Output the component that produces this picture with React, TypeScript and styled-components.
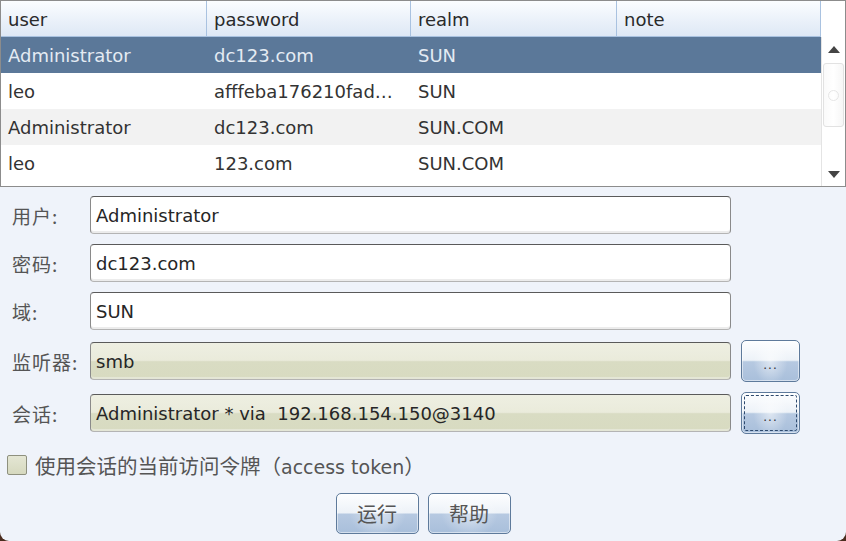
import React from "react";
import styled, { createGlobalStyle } from "styled-components";

const GlobalStyle = createGlobalStyle`
  html, body {
    margin: 0;
    padding: 0;
    background: #4a2c1e;
  }
  #root {
    width: 846px;
    height: 541px;
  }
`;

const LATIN = `"DejaVu Sans", "Noto Sans CJK SC", sans-serif`;
const CJK = `"Noto Sans CJK SC", "DejaVu Sans", sans-serif`;

const Window = styled.div`
  width: 846px;
  height: 541px;
  overflow: hidden;
  background: #eff3fa;
  border-bottom-left-radius: 9px;
  border-bottom-right-radius: 9px;
  display: flex;
  flex-direction: column;
  font-family: ${LATIN};
`;

/* table */
const Table = styled.div`
  height: 187px;
  box-sizing: border-box;
  border: 1px solid #8c8c8c;
  background: #fff;
  display: flex;
  flex-direction: column;
`;

const HeaderRow = styled.div`
  display: flex;
  height: 36px;
  flex: none;
`;

const HeaderCells = styled.div`
  display: flex;
  width: 820px;
  box-sizing: border-box;
  background: linear-gradient(#fbfdff, #e9f0f9 60%, #dee8f5);
  border-bottom: 1px solid #a9c2e0;
`;

const HeaderCell = styled.div<{ $w: number }>`
  width: ${(p) => p.$w}px;
  box-sizing: border-box;
  border-right: 1px solid #a9c2e0;
  padding: 2px 0 0 7px;
  display: flex;
  align-items: center;
  font-size: 18px;
  color: #2a2a2a;
`;

const Body = styled.div`
  flex: 1;
  display: flex;
  min-height: 0;
`;

const Rows = styled.div`
  width: 820px;
  display: flex;
  flex-direction: column;
`;

const Row = styled.div<{ $selected?: boolean; $odd?: boolean }>`
  display: flex;
  height: 36px;
  background: ${(p) => (p.$selected ? "#5b7899" : p.$odd ? "#f2f2f2" : "#fff")};
  color: ${(p) => (p.$selected ? "#e4ebf3" : "#333")};
`;

const Cell = styled.div<{ $w: number }>`
  width: ${(p) => p.$w}px;
  box-sizing: border-box;
  padding: 1px 0 0 7px;
  display: flex;
  align-items: center;
  font-size: 18px;
  white-space: nowrap;
  overflow: hidden;
`;

const ScrollBar = styled.div`
  width: 24px;
  display: flex;
  flex-direction: column;
  border-left: 1px solid #e4e4e4;
  background: #fff;
`;

const ScrollButton = styled.div`
  height: 24px;
  flex: none;
  display: flex;
  align-items: center;
  justify-content: center;
`;

const Track = styled.div`
  flex: 1;
  padding: 2px 1px 0;
`;

const Thumb = styled.div`
  height: 64px;
  box-sizing: border-box;
  border: 1px solid #e2e2e2;
  border-radius: 3px;
  background: linear-gradient(90deg, #fafafa, #fff 50%, #f6f6f6);
  display: flex;
  align-items: center;
  justify-content: center;
`;

const Grip = styled.div`
  width: 9px;
  height: 9px;
  border-radius: 50%;
  border: 1px solid #e6e6e6;
`;

/* form */
const Form = styled.div`
  flex: 1;
  display: flex;
  flex-direction: column;
  padding: 9px 0 0 12px;
`;

const FieldRow = styled.div<{ $tall?: boolean }>`
  display: flex;
  align-items: center;
  height: ${(p) => (p.$tall ? 42 : 38)}px;
  margin-bottom: 10px;
`;

const Label = styled.div`
  width: 78px;
  font-family: ${CJK};
  font-size: 19px;
  color: #555;
  letter-spacing: 1px;
`;

const Field = styled.div<{ $locked?: boolean }>`
  width: 641px;
  height: 38px;
  box-sizing: border-box;
  border: 1px solid #8a8a8a;
  border-top-color: #5a5a5a;
  border-bottom-color: #b4b4b4;
  border-radius: 4px;
  padding-left: 5px;
  display: flex;
  align-items: center;
  font-size: 18px;
  color: #262626;
  white-space: pre;
  background: ${(p) =>
    p.$locked
      ? "linear-gradient(#eeefe2 0, #eaebdb 48%, #d9dcc3 52%, #d8dbc1 100%)"
      : "#fff"};
  box-shadow: ${(p) =>
    p.$locked ? "inset 0 -2px 0 #e4e6d6" : "inset 0 -2px 0 #ececec"};
`;

const BrowseButton = styled.div<{ $focused?: boolean }>`
  width: 59px;
  height: 42px;
  margin-left: 10px;
  box-sizing: border-box;
  border: 1px solid #5e7a9b;
  border-radius: 5px;
  background: radial-gradient(ellipse 30% 60% at 50% 50%, rgba(255, 255, 255, 0.55), transparent),
    linear-gradient(#fdfeff 0, #edf2f8 48%, #b6c9e1 52%, #a9bfdb 100%);
  box-shadow: inset 0 0 0 1px rgba(255, 255, 255, 0.5);
  display: flex;
  align-items: center;
  justify-content: center;
  padding-top: 8px;
  font-size: 12px;
  letter-spacing: 1px;
  color: #333;
  outline: ${(p) => (p.$focused ? "1px dashed #2e4a6e" : "none")};
  outline-offset: -4px;
`;

const CheckRow = styled.label`
  display: flex;
  align-items: center;
  gap: 8px;
  margin: 8px 0 0 -5px;
  height: 26px;
  font-family: ${CJK};
  font-size: 20.5px;
  color: #555;
`;

const CheckBox = styled.span`
  width: 20px;
  height: 20px;
  box-sizing: border-box;
  border: 1px solid #8e907e;
  border-radius: 2px;
  background: linear-gradient(#e4e6d4, #d6d9bf);
`;

const Latin = styled.span`
  font-family: ${LATIN};
  font-size: 19px;
`;

const Actions = styled.div`
  display: flex;
  justify-content: center;
  gap: 9px;
  margin: 15px 0 0 -12px;
`;

const ActionButton = styled.div`
  width: 83px;
  height: 41px;
  box-sizing: border-box;
  border: 1px solid #5e7a9b;
  border-radius: 5px;
  background: radial-gradient(ellipse 35% 60% at 50% 50%, rgba(255, 255, 255, 0.5), transparent),
    linear-gradient(#fdfeff 0, #edf2f8 48%, #b6c9e1 52%, #a9bfdb 100%);
  box-shadow: inset 0 0 0 1px rgba(255, 255, 255, 0.5);
  display: flex;
  align-items: center;
  justify-content: center;
  font-family: ${CJK};
  font-size: 20px;
  color: #555;
`;

const columns = [
  { key: "user", w: 206 },
  { key: "password", w: 204 },
  { key: "realm", w: 206 },
  { key: "note", w: 204 },
];

const creds = [
  ["Administrator", "dc123.com", "SUN", ""],
  ["leo", "afffeba176210fad…", "SUN", ""],
  ["Administrator", "dc123.com", "SUN.COM", ""],
  ["leo", "123.com", "SUN.COM", ""],
];

const Arrow = ({ up }: { up?: boolean }) => (
  <svg width="12" height="7" viewBox="0 0 12 7">
    <path d={up ? "M0 7 L6 0 L12 7 Z" : "M0 0 L6 7 L12 0 Z"} fill="#444" />
  </svg>
);

export default function App() {
  return (
    <>
      <GlobalStyle />
      <Window>
        <Table>
          <HeaderRow>
            <HeaderCells>
              {columns.map((c) => (
                <HeaderCell key={c.key} $w={c.w}>
                  {c.key}
                </HeaderCell>
              ))}
            </HeaderCells>
          </HeaderRow>
          <Body>
            <Rows>
              {creds.map((r, i) => (
                <Row key={i} $selected={i === 0} $odd={i === 2}>
                  {r.map((v, j) => (
                    <Cell key={j} $w={columns[j].w}>
                      {v}
                    </Cell>
                  ))}
                </Row>
              ))}
            </Rows>
            <ScrollBar>
              <ScrollButton>
                <Arrow up />
              </ScrollButton>
              <Track>
                <Thumb>
                  <Grip />
                </Thumb>
              </Track>
              <ScrollButton>
                <Arrow />
              </ScrollButton>
            </ScrollBar>
          </Body>
        </Table>

        <Form>
          <FieldRow>
            <Label>用户:</Label>
            <Field>Administrator</Field>
          </FieldRow>
          <FieldRow>
            <Label>密码:</Label>
            <Field>dc123.com</Field>
          </FieldRow>
          <FieldRow>
            <Label>域:</Label>
            <Field>SUN</Field>
          </FieldRow>
          <FieldRow $tall>
            <Label>监听器:</Label>
            <Field $locked>smb</Field>
            <BrowseButton>...</BrowseButton>
          </FieldRow>
          <FieldRow $tall>
            <Label>会话:</Label>
            <Field $locked>Administrator * via  192.168.154.150@3140</Field>
            <BrowseButton $focused>...</BrowseButton>
          </FieldRow>
          <CheckRow>
            <CheckBox />
            <span>
              使用会话的当前访问令牌（<Latin>access token</Latin>）
            </span>
          </CheckRow>
          <Actions>
            <ActionButton>运行</ActionButton>
            <ActionButton>帮助</ActionButton>
          </Actions>
        </Form>
      </Window>
    </>
  );
}
